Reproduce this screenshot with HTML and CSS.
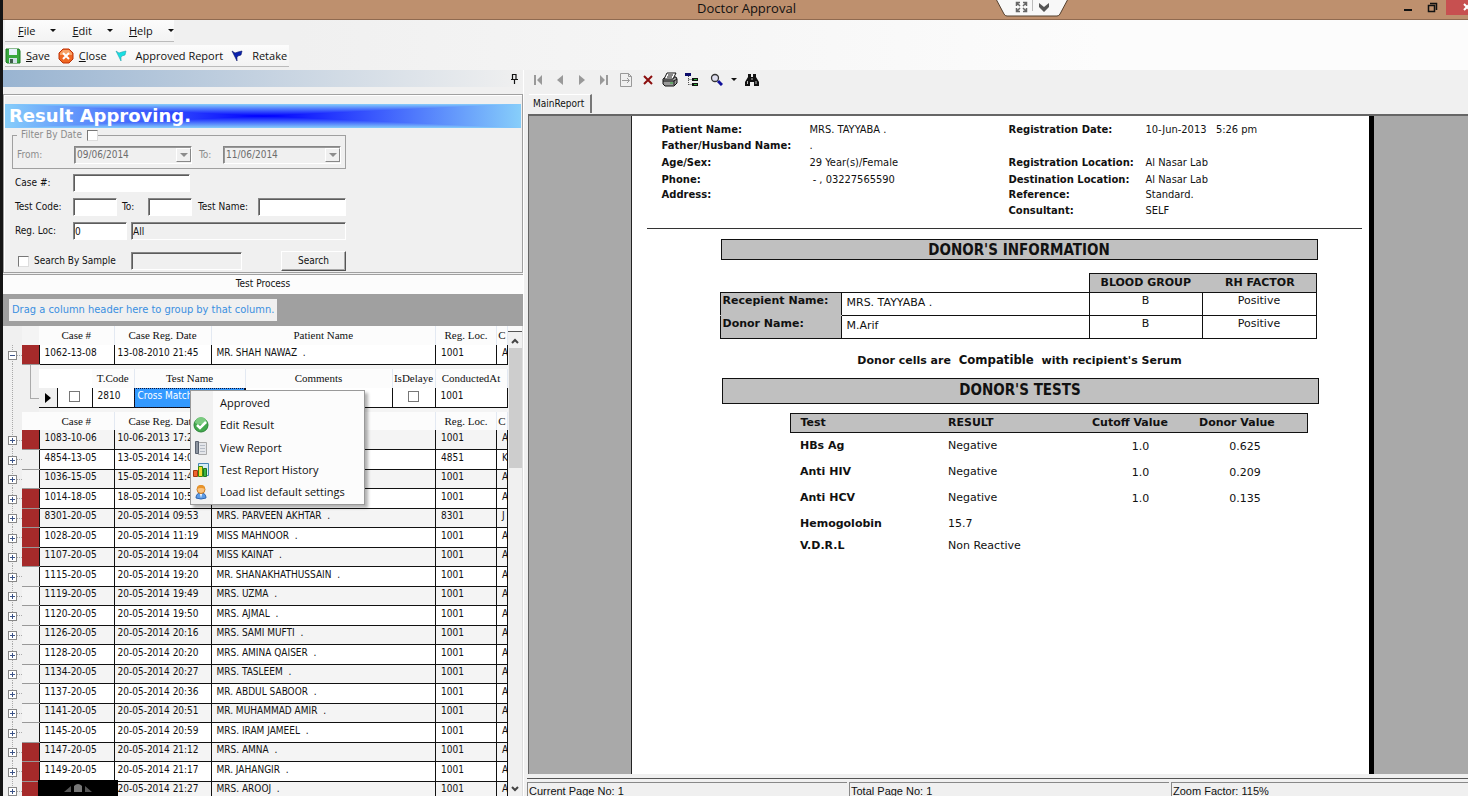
FILE: index.html
```
<!DOCTYPE html>
<html lang="en">

<head>
    <meta charset="UTF-8">
    <title>Doctor Approval</title>
    <link rel="stylesheet" href="styles.css">
</head>

<body>
    <header class="titlebar">
        <h1>Doctor Approval</h1>
        <div class="remote-tab">
            <svg width="74" height="18" viewBox="0 0 74 18">
                <path d="M1 -1L9 14Q10 16 12 16H62Q64 16 65 14L73 -1Z" fill="#f8f8f8" stroke="#54402f" stroke-width="1" />
                <path d="M21.500 6V2.500H25M28 2.500h3.500V6M31.500 8v3.500H28M25 11.500h-3.500V8M22 3l3 3M31 3l-3 3M31 11l-3-3M22 11l3-3" fill="none" stroke="#666" stroke-width="1.500" />
                <path d="M37.500 0V11" stroke="#bbb" />
                <path d="M44 3l5 4 5-4v4l-5 5-5-5z" fill="#555" />
            </svg>
        </div>
        <div class="window-buttons">
            <button aria-label="Minimize"><svg width="10" height="12"><path d="M1 8h8" stroke="#111" stroke-width="2" /></svg></button>
            <button aria-label="Restore"><svg width="12" height="12"><path d="M1.500 3.500h6v6h-6zM3 1.500h6.500V8" fill="none" stroke="#111" stroke-width="1.500" /></svg></button>
            <button class="close" aria-label="Close"><svg width="5" height="12"><path d="M1 2l6 6M1 8l6-6" stroke="#fff" stroke-width="2" /></svg></button>
        </div>
    </header>

    <div class="bars">
        <nav class="menubar">
            <button><u>F</u>ile<i class="caret"></i></button>
            <button><u>E</u>dit<i class="caret"></i></button>
            <button><u>H</u>elp<i class="caret"></i></button>
        </nav>
        <div class="toolbar">
            <button>
                <svg width="16" height="16" viewBox="0 0 16 16">
                    <path d="M1 1h13l1 2v12H2l-1-1z" fill="#38a83c" stroke="#1e7a25" />
                    <path d="M4 1h8v6H4z" fill="#e6f1fa" />
                    <path d="M4 10h8v5H4z" fill="#cfe0e8" />
                    <path d="M5 11h3v4H5z" fill="#3b5d48" />
                </svg>
                <span><u>S</u>ave</span>
            </button>
            <button>
                <svg width="16" height="16" viewBox="0 0 16 16">
                    <path d="M5 1h6l4 4v6l-4 4H5l-4-4V5z" fill="#ef6722" stroke="#bd3208" />
                    <path d="M5 2h6l3 3v2H2V5z" fill="#f8a267" />
                    <path d="M5 5l6 6M11 5l-6 6" stroke="#fff" stroke-width="2" />
                </svg>
                <span><u>C</u>lose</span>
            </button>
            <button class="flag">
                <svg width="12" height="12" viewBox="0 0 12 12"><path d="M1 1l3 2 3-1 4-1-1 4-3 1-1 1v4l-2-4z" fill="#18dfe2" stroke="#24a4b0" stroke-width=".6" /></svg>
                <span>Approved Report</span>
            </button>
            <button class="flag">
                <svg width="12" height="12" viewBox="0 0 12 12"><path d="M1 1l3 2 3-1 4-1-1 4-3 1-1 1v4l-2-4z" fill="#0b22b0" stroke="#0a1668" stroke-width=".6" /></svg>
                <span>Retake</span>
            </button>
        </div>
    </div>

    <main>
        <!-- search form and case list -->
        <section class="left">
            <div class="dock-bar">
                <svg width="9" height="11" viewBox="0 0 9 11"><path d="M2.500 6V1.500H6V6M1 6.500h7M4.500 7v4M6 1v5" fill="none" stroke="#111" stroke-width="1.200" /></svg>
            </div>
            <form class="search">
                <h2><span>Result Approving.</span></h2>
                <fieldset>
                    <legend><label for="byDate">Filter By Date</label><input type="checkbox" id="byDate"></legend>
                    <label class="c1" for="from">From:</label>
                    <div class="combo"><select id="from" disabled><option>09/06/2014</option></select><span><i class="caret"></i></span></div>
                    <label class="to" for="to">To:</label>
                    <div class="combo"><select id="to" disabled><option>11/06/2014</option></select><span><i class="caret"></i></span></div>
                </fieldset>
                <div class="row">
                    <label class="c1" for="caseNo">Case #:</label>
                    <input type="text" class="w-case" id="caseNo">
                </div>
                <div class="row">
                    <label class="c1" for="codeFrom">Test Code:</label>
                    <input type="text" class="w-code" id="codeFrom">
                    <label class="code-to" for="codeTo">To:</label>
                    <input type="text" class="w-code" id="codeTo">
                    <label class="name" for="testName">Test Name:</label>
                    <input type="text" class="grow" id="testName">
                </div>
                <div class="row">
                    <label class="c1" for="loc">Reg. Loc:</label>
                    <input type="text" class="w-loc" id="loc" value="0">
                    <input type="text" class="grow off" aria-label="Location name" value="All" readonly>
                </div>
                <div class="row last">
                    <label class="sample"><input type="checkbox"> Search By Sample</label>
                    <input type="text" class="w-sample off" aria-label="Sample" readonly>
                    <button type="button" class="btn">Search</button>
                </div>
            </form>
            <div class="caption">Test Process</div>
            <div class="group-bar"><span>Drag a column header here to group by that column.</span></div>
            <div class="grid">
                <table class="cases">
                    <colgroup>
                        <col class="k-tree"><col class="k-mark"><col class="k-case"><col class="k-date"><col><col class="k-loc"><col class="k-c">
                    </colgroup>
                    <tbody id="cases">
                        <tr class="head first">
                            <td></td><td></td><th>Case #</th><th>Case Reg. Date</th><th>Patient Name</th><th>Reg. Loc.</th><th>C</th>
                        </tr>
                        <tr>
                            <td class="tree"><button class="expand" aria-label="Collapse"></button></td>
                            <td class="mark red"></td><td>1062-13-08</td><td>13-08-2010 21:45</td><td>MR. SHAH NAWAZ&nbsp; .</td><td>1001</td><td>A</td>
                        </tr>
                        <tr class="detail">
                            <td class="tree line"></td>
                            <td class="elbow"></td>
                            <td colspan="5">
                                <table class="tests">
                                    <colgroup>
                                        <col class="t-arrow"><col class="t-check"><col class="t-code"><col class="t-name"><col><col class="t-delay"><col class="t-at">
                                    </colgroup>
                                    <tr class="head">
                                        <td colspan="2"></td><th>T.Code</th><th>Test Name</th><th>Comments</th><th>IsDelaye</th><th>ConductedAt</th>
                                    </tr>
                                    <tr>
                                        <td class="arrow"><svg width="6" height="10"><path d="M0 0l6 5-6 5z" /></svg></td>
                                        <td class="check"><input type="checkbox" aria-label="Select test"></td>
                                        <td>2810</td>
                                        <td class="selected">Cross Match</td>
                                        <td></td>
                                        <td class="check"><input type="checkbox" aria-label="Delayed"></td>
                                        <td>1001</td>
                                    </tr>
                                </table>
                            </td>
                        </tr>
                        <tr class="head">
                            <td class="tree line"></td><td></td><th>Case #</th><th>Case Reg. Date</th><th>Patient Name</th><th>Reg. Loc.</th><th>C</th>
                        </tr>
                    </tbody>
                </table>
                <div class="scrollbar">
                    <div class="splitter"></div>
                    <svg width="8" height="6"><path d="M1 5l3-3 3 3" fill="none" stroke="#444" stroke-width="2" /></svg>
                    <div class="thumb"></div>
                    <svg class="down" width="8" height="6"><path d="M1 1l3 3 3-3" fill="none" stroke="#444" stroke-width="2" /></svg>
                </div>
            </div>
        </section>

        <!-- report preview -->
        <section class="right">
            <div class="viewer-tools">
                <button aria-label="First page"><svg width="10" height="12"><path d="M1 1h2v10H1zM9 1v10L4 6z" fill="#999" /></svg></button>
                <button aria-label="Previous page"><svg width="10" height="12"><path d="M8 1v10L2 6z" fill="#999" /></svg></button>
                <button aria-label="Next page"><svg width="10" height="12"><path d="M2 1v10l6-5z" fill="#999" /></svg></button>
                <button aria-label="Last page"><svg width="10" height="12"><path d="M1 1v10l5-5zM7 1h2v10H7z" fill="#999" /></svg></button>
                <button aria-label="Go to page"><svg width="14" height="16"><path d="M1.500 1.500h8l3 3v10h-11zM9.500 1.500v3h3M3 8.500h7M8 6l2.500 2.500L8 11" fill="none" stroke="#999" /></svg></button>
                <button aria-label="Close view"><svg width="10" height="10"><path d="M1 1l8 8M9 1L1 9" stroke="#8b0d0d" stroke-width="2" /></svg></button>
                <button aria-label="Print">
                    <svg width="16" height="15" viewBox="0 0 16 15">
                        <path d="M1 7l3-2h10l1 2v4l-3 3H3l-2-2z" fill="#999" stroke="#111" />
                        <path d="M5 1h9l-3 6H2z" fill="#fff" stroke="#111" />
                        <path d="M1 9h11M12 13V9l3-2M6 3h5M5 5h5" fill="none" stroke="#111" />
                        <path d="M8 11h3" stroke="#2fae3a" />
                    </svg>
                </button>
                <button aria-label="Group tree">
                    <svg width="14" height="13" viewBox="0 0 14 13">
                        <path d="M0 0h6v3H0z" fill="#0a0a6a" />
                        <path d="M3.500 3v9M3.500 6.500H8M3.500 11.500H8" stroke="#555" stroke-dasharray="1 1" />
                        <path d="M7 5h6v3H7zM7 10h6v3H7z" fill="#111" />
                        <path d="M9 6.500h3M9 11.500h3" stroke="#2fae3a" />
                    </svg>
                </button>
                <button class="zoom" aria-label="Zoom"><svg width="13" height="13"><circle cx="5" cy="5" r="3.500" fill="#dde" stroke="#333" stroke-width="1.300" /><path d="M8 8l4 4" stroke="#10109a" stroke-width="3" /></svg><i class="caret"></i></button>
                <button aria-label="Search text">
                    <svg width="14" height="14" viewBox="0 0 14 14">
                        <path d="M3 1h3v3h2V1h3v3l3 5v4H9V9H5v4H0V9l3-5z" fill="#111" />
                        <path d="M2.500 8v3M11 8v3M7 5v2" stroke="#bbb" />
                    </svg>
                </button>
            </div>
            <div class="tabs"><button>MainReport</button></div>
            <div class="viewer">
                <article class="page">
                    <div class="patient">
                        <b>Patient Name:</b><span>MRS. TAYYABA .</span><b>Registration Date:</b><span>10-Jun-2013 &nbsp; 5:26 pm</span>
                        <b>Father/Husband Name:</b><span>.</span><b></b><span></span>
                        <b>Age/Sex:</b><span>29 Year(s)/Female</span><b>Registration Location:</b><span>Al Nasar Lab</span>
                        <b>Phone:</b><span>&nbsp;- , 03227565590</span><b>Destination Location:</b><span>Al Nasar Lab</span>
                        <b>Address:</b><span></span><b>Reference:</b><span>Standard.</span>
                        <b></b><span></span><b>Consultant:</b><span>SELF</span>
                    </div>
                    <h3>DONOR'S INFORMATION</h3>
                    <table class="blood">
                        <colgroup><col class="b-label"><col><col class="b-group"><col class="b-factor"></colgroup>
                        <tr>
                            <td class="blank" colspan="2"></td><th class="bg">BLOOD GROUP</th><th class="rh">RH FACTOR</th>
                        </tr>
                        <tr>
                            <th class="side">Recepient Name:</th><td>MRS. TAYYABA .</td><td class="mid">B</td><td class="mid">Positive</td>
                        </tr>
                        <tr>
                            <th class="side">Donor Name:</th><td>M.Arif</td><td class="mid">B</td><td class="mid">Positive</td>
                        </tr>
                    </table>
                    <p class="verdict">Donor cells are <strong>Compatible</strong> with recipient's Serum</p>
                    <h3 class="tall">DONOR'S TESTS</h3>
                    <table class="results">
                        <colgroup><col class="r-test"><col class="r-result"><col class="r-cut"><col></colgroup>
                        <thead>
                            <tr><th>Test</th><th>RESULT</th><th>Cutoff Value</th><th>Donor Value</th></tr>
                        </thead>
                        <tbody>
                            <tr><th>HBs Ag</th><td>Negative</td><td>1.0</td><td>0.625</td></tr>
                            <tr><th>Anti HIV</th><td>Negative</td><td>1.0</td><td>0.209</td></tr>
                            <tr><th>Anti HCV</th><td>Negative</td><td>1.0</td><td>0.135</td></tr>
                            <tr><th>Hemogolobin</th><td>15.7</td><td></td><td></td></tr>
                            <tr class="short"><th>V.D.R.L</th><td>Non Reactive</td><td></td><td></td></tr>
                        </tbody>
                    </table>
                </article>
            </div>
            <footer class="status">
                <span>Current Page No: 1</span><span>Total Page No: 1</span><span>Zoom Factor: 115%</span>
            </footer>
        </section>
    </main>

    <div class="context-menu" role="menu">
        <button role="menuitem"><i></i>Approved</button>
        <button role="menuitem"><i>
            <svg width="16" height="16"><circle cx="8" cy="8" r="7" fill="#41a94c" stroke="#2b8437" /><path d="M2 6a6 6 0 0 1 12 0q-6 3-12 0" fill="#7bcb80" /><path d="M4 8l3 3 6-6" fill="none" stroke="#fff" stroke-width="2.500" /></svg>
        </i>Edit Result</button>
        <button role="menuitem"><i>
            <svg width="14" height="16"><path d="M4.500 2.500h8v12h-8z" fill="#e4e6ea" stroke="#aaa" /><path d="M1.500 1.500h3v12h-3z" fill="#8d95a0" stroke="#5a6270" /><path d="M6 5.500h5M6 8.500h5M6 11.500h5" stroke="#b5bbc5" /></svg>
        </i>View Report</button>
        <button role="menuitem"><i>
            <svg width="16" height="16"><path d="M5.500 1.500h10v12h-10z" fill="#d6ecf8" stroke="#4788b5" /><path d="M.5 8.500h4v6h-4z" fill="#f0642e" stroke="#a33a10" /><path d="M5.500 4.500h4v10h-4z" fill="#f7d92f" stroke="#3a8a10" /><path d="M10.500 6.500h3v8h-3z" fill="#3db53f" stroke="#1d7420" /></svg>
        </i>Test Report History</button>
        <button role="menuitem"><i>
            <svg width="14" height="16"><path d="M2 14q0-5 5-5t5 5q-5 2-10 0z" fill="#5c9be6" stroke="#2f66b0" /><circle cx="7" cy="5.500" r="4" fill="#fbc27c" stroke="#c77b24" /><path d="M3 5q0-4 4-4t4 4q-4-2-8 0z" fill="#e8942a" /><path d="M6 10l1 4 1-4z" fill="#fff" /></svg>
        </i>Load list default settings</button>
    </div>

    <div class="touch-bar">
        <svg width="28" height="8"><path d="M0 8l7-6v6zM28 8l-7-6v6z" fill="#555" /><path d="M10 8V2q4-4 8 0v6z" fill="#777" /></svg>
    </div>

    <script>
        // case no, reg. date, patient, location, conducted by, marked red
        const cases = [
            ['1083-10-06', '10-06-2013 17:26', '', '1001', 'A', 1],
            ['4854-13-05', '13-05-2014 14:05', '', '4851', 'K', 0],
            ['1036-15-05', '15-05-2014 11:42', '', '1001', 'A', 0],
            ['1014-18-05', '18-05-2014 10:55', '', '1001', 'A', 1],
            ['8301-20-05', '20-05-2014 09:53', 'MRS. PARVEEN AKHTAR', '8301', 'J', 1],
            ['1028-20-05', '20-05-2014 11:19', 'MISS MAHNOOR', '1001', 'A', 1],
            ['1107-20-05', '20-05-2014 19:04', 'MISS KAINAT', '1001', 'A', 1],
            ['1115-20-05', '20-05-2014 19:20', 'MR. SHANAKHATHUSSAIN', '1001', 'A', 0],
            ['1119-20-05', '20-05-2014 19:49', 'MRS. UZMA', '1001', 'A', 0],
            ['1120-20-05', '20-05-2014 19:50', 'MRS. AJMAL', '1001', 'A', 0],
            ['1126-20-05', '20-05-2014 20:16', 'MRS. SAMI MUFTI', '1001', 'A', 0],
            ['1128-20-05', '20-05-2014 20:20', 'MRS. AMINA QAISER', '1001', 'A', 0],
            ['1134-20-05', '20-05-2014 20:27', 'MRS. TASLEEM', '1001', 'A', 0],
            ['1137-20-05', '20-05-2014 20:36', 'MR. ABDUL SABOOR', '1001', 'A', 0],
            ['1141-20-05', '20-05-2014 20:51', 'MR. MUHAMMAD AMIR', '1001', 'A', 0],
            ['1145-20-05', '20-05-2014 20:59', 'MRS. IRAM JAMEEL', '1001', 'A', 0],
            ['1147-20-05', '20-05-2014 21:12', 'MRS. AMNA', '1001', 'A', 1],
            ['1149-20-05', '20-05-2014 21:17', 'MR. JAHANGIR', '1001', 'A', 1],
            ['1150-20-05', '20-05-2014 21:27', 'MRS. AROOJ', '1001', 'A', 1]
        ];

        const body = document.getElementById('cases');
        cases.forEach(([no, date, patient, loc, by, red]) => {
            const tr = document.createElement('tr');
            tr.innerHTML = `<td class="tree"><button class="expand plus" aria-label="Expand"></button></td>
                <td class="mark ${red ? 'red' : ''}"></td><td>${no}</td><td>${date}</td>
                <td>${patient ? patient + '&nbsp; .' : ''}</td><td>${loc}</td><td>${by}</td>`;
            body.appendChild(tr);
        });
    </script>
</body>

</html>
```
FILE: styles.css
```
* {
    box-sizing: border-box;
}

body {
    display: flex;
    flex-direction: column;
    height: 100vh;
    margin: 0;
    border-left: 3px solid #151515;
    background: #f0f0f0;
    color: #111;
    font: 10px/14px "DejaVu Sans Condensed", "DejaVu Sans", sans-serif;
    overflow: hidden;
}

button {
    display: flex;
    align-items: center;
    padding: 0;
    border: 0;
    background: none;
    color: inherit;
    font: inherit;
}

table {
    border-collapse: collapse;
    table-layout: fixed;
}

td,
th {
    padding: 0;
}

.caret {
    width: 0;
    border: 3px solid transparent;
    border-top-color: currentColor;
    border-bottom: 0;
}

/* title bar */
.titlebar {
    position: relative;
    flex: none;
    height: 20px;
    background: #be906e;
    border-bottom: 1px solid #8f6a50;
}

.titlebar h1 {
    margin: 0 0 0 22px;
    font: 13px/17px "Open Sans", sans-serif;
    text-align: center;
}

.remote-tab {
    position: absolute;
    top: 0;
    right: 399px;
}

.window-buttons {
    position: absolute;
    top: 0;
    right: 0;
    display: flex;
    gap: 14px;
    height: 15px;
}

.window-buttons .close {
    width: 22px;
    margin-left: -7px;
    background: #c75050;
    justify-content: flex-end;
}

/* menu and toolbar */
.bars {
    flex: none;
    height: 50px;
    padding: 0 2px;
    background: linear-gradient(90deg, #f0f0f0 20%, #fcfcfc 75%);
    font: 11px/20px "Open Sans", sans-serif;
}

.menubar,
.toolbar {
    display: flex;
    width: 169px;
    height: 22px;
    margin-bottom: 3px;
    background: linear-gradient(#fcfcfc, #f3f3f3);
    border-bottom: 1px solid #bbb;
}

.menubar {
    gap: 16px;
    padding-left: 13px;
}

.menubar .caret {
    margin-left: 15px;
}

.toolbar {
    width: 284px;
    gap: 8px;
}

.toolbar button {
    gap: 5px;
}

.toolbar .flag {
    gap: 9px;
}

main {
    display: flex;
    flex: 1;
    min-height: 0;
}

/* left pane */
.left {
    display: flex;
    flex-direction: column;
    flex: none;
    width: 521px;
    border-right: 1px solid #fff;
}

.dock-bar {
    display: flex;
    flex: none;
    justify-content: flex-end;
    align-items: center;
    height: 17px;
    margin-bottom: 7px;
    padding-right: 4px;
    background: linear-gradient(90deg, #99b4d1, #f0f0f0);
}

.search {
    flex: none;
    height: 179px;
    padding: 9px 1px 0;
    border: 1px solid #a0a0a0;
    box-shadow: inset 1px 1px #fff;
}

/* the banner shades from its centre out to all four edges */
.search h2 {
    position: relative;
    height: 24px;
    margin: 0 0 2px;
    padding-left: 4px;
    background: linear-gradient(#87cefa, #0000ff, #87cefa);
    color: #fff;
    font: bold 18px/23px "DejaVu Sans", sans-serif;
}

.search h2::before {
    content: "";
    position: absolute;
    inset: 0;
    background: linear-gradient(90deg, #87cefa, #0000ff, #87cefa);
    clip-path: polygon(0 0, 100% 100%, 100% 0, 0 100%);
}

.search h2 span {
    position: relative;
}

fieldset {
    display: flex;
    align-items: center;
    width: 334px;
    height: 39px;
    margin: 0 0 5px 7px;
    padding: 0 4px;
    border: 1px solid #a0a0a0;
    color: #8c8c8c;
}

legend {
    display: flex;
    gap: 5px;
    padding: 0 0 0 4px;
    line-height: 10px;
}

fieldset .c1 {
    width: 57px;
}

label {
    flex: none;
}

input[type="text"],
select {
    height: 18px;
    padding: 0 1px;
    border: 1px solid;
    border-color: #868686 #fff #fff #868686;
    border-radius: 0;
    box-shadow: inset 1px 1px #5c5c5c;
    background: #fff;
    font: inherit;
    color: inherit;
    min-width: 0;
}

input[type="text"].off {
    background: #f0f0f0;
}

input[type="checkbox"] {
    appearance: none;
    width: 11px;
    height: 11px;
    margin: 0;
    border: 1px solid #777;
    border-right-color: #ddd;
    border-bottom-color: #ddd;
    background: #fff;
}

.combo {
    position: relative;
    width: 118px;
}

.combo select {
    appearance: none;
    display: block;
    width: 100%;
    padding: 1px 2px 0;
    background: #f0f0f0;
    opacity: 1;
    box-shadow: inset 1px 1px #999;
    font-size: 10px;
    color: #6d6d6d;
}

.combo span {
    position: absolute;
    top: 2px;
    right: 1px;
    display: flex;
    align-items: center;
    justify-content: center;
    width: 15px;
    height: 14px;
    border: 1px solid #888;
    border-top-color: #fff;
    border-left-color: #fff;
}

.combo .caret {
    border-width: 4px 4px 0;
}

.to {
    width: 31px;
    padding-left: 7px;
}

.row {
    display: flex;
    align-items: center;
    width: 341px;
    height: 18px;
    margin-bottom: 6px;
    padding-left: 10px;
}

.row .c1 {
    width: 58px;
}

.w-case {
    width: 117px;
}

.w-code {
    width: 44px;
}

.code-to {
    width: 31px;
    padding-left: 5px;
}

.name {
    width: 66px;
    padding-left: 6px;
}

.w-loc {
    width: 54px;
    margin-right: 4px;
}

.grow {
    flex: 1;
}

.row.last {
    margin-top: 12px;
}

.sample {
    display: flex;
    align-items: center;
    gap: 5px;
    width: 116px;
    padding-left: 3px;
}

.w-sample {
    width: 111px;
}

.btn {
    justify-content: center;
    width: 65px;
    height: 20px;
    margin-left: auto;
    border: 1px solid;
    border-color: #fff #555 #555 #fff;
    box-shadow: inset -1px -1px #aaa;
}

.caption {
    flex: none;
    height: 20px;
    margin-top: 1px;
    border-top: 1px solid #a0a0a0;
    background: #fcfcfc;
    line-height: 18px;
    text-align: center;
}

.group-bar {
    flex: none;
    height: 32px;
    padding: 5px 6px;
    background: #a0a0a0;
}

.group-bar span {
    display: inline-block;
    height: 22px;
    padding: 0 3px;
    background: #f0f0f0;
    color: #3a8fe0;
    font: 11px/22px "DejaVu Sans Condensed", "DejaVu Sans", sans-serif;
}

/* case list */
.grid {
    display: flex;
    flex: 1;
    min-height: 0;
}

.cases {
    flex: 1;
    width: 505px;
    height: max-content;
}

.k-tree {
    width: 19px;
}

.k-mark {
    width: 17px;
}

.k-case {
    width: 75px;
}

.k-date {
    width: 97px;
}

.k-loc {
    width: 61px;
}

.k-c {
    width: 11px;
}

.cases tr {
    height: 20px;
}

.cases tr:nth-child(odd) {
    height: 19px;
}

.cases td {
    padding: 0 0 3px 5px;
    border-right: 1px solid #111;
    border-bottom: 1px solid #111;
    background: #fff;
    line-height: 14px;
    white-space: nowrap;
    overflow: hidden;
}

.cases tr:nth-child(odd) td {
    background: #f4f4f4;
}

.cases td:nth-child(4) {
    padding-left: 3px;
}

.cases .head {
    height: 18px;
}

.cases .head.first,
.cases .head.first + tr {
    height: 19px;
}

.cases .head td,
.cases .head th {
    padding: 0;
    background: #fcfcfc;
    border: 0;
    font: 10px/17px "Liberation Serif", serif;
}

.cases .head th {
    border-right: 1px solid #e3e9f2;
    font-size: 11px;
    overflow: hidden;
}

.cases tr .tree,
.cases tr:nth-child(odd) .tree {
    padding: 2px 0 0 5px;
    border: 0;
    background:
        linear-gradient(#aaa 50%, transparent 50%) 9px 0 / 1px 2px repeat-y,
        linear-gradient(90deg, #aaa 50%, transparent 50%) 0 10px / 2px 1px repeat-x,
        #f0f0f0;
}

/* hides the horizontal dots left of the box */
.cases tr .tree:not(.line) {
    box-shadow: inset 5px 0 #f0f0f0;
}

.cases tr .tree.line,
.cases tr:nth-child(odd) .tree.line {
    background: linear-gradient(#aaa 50%, transparent 50%) 9px 0 / 1px 2px repeat-y #f0f0f0;
}

.cases .head.first td:first-child {
    background: #f0f0f0;
}

.cases tr .mark {
    border-bottom-color: #999;
    background: #f0f0f0;
}

.cases tr .mark.red,
.cases tr:nth-child(odd) .mark.red {
    background: #a52a2a;
}

.expand {
    justify-content: center;
    width: 9px;
    height: 9px;
    border: 1px solid #888;
    background: linear-gradient(#3c5488, #3c5488) center / 5px 1px no-repeat, #fff;
}

.expand.plus {
    background: linear-gradient(#3c5488, #3c5488) center / 5px 1px no-repeat, linear-gradient(#3c5488, #3c5488) center / 1px 5px no-repeat, #fff;
}

.cases .detail,
.cases .detail > td {
    height: 48px;
    padding: 0;
    border: 0;
    background: #f0f0f0;
    vertical-align: middle;
}

.cases .detail .elbow {
    background: linear-gradient(#aaa, #aaa) 8px 0 / 1px 33px no-repeat, linear-gradient(#aaa, #aaa) 8px 33px / 9px 1px no-repeat, #f0f0f0;
}

.tests {
    width: 100%;
}

.t-arrow {
    width: 18px;
}

.t-check {
    width: 35px;
}

.t-code {
    width: 42px;
}

.t-name {
    width: 111px;
}

.t-delay {
    width: 43px;
}

.t-at {
    width: 72px;
}

.tests tr:nth-child(n) td {
    background: #fff;
}

.cases .tests .selected {
    background: #3399ff;
    color: #fff;
    outline: 1px dotted #113;
    outline-offset: -1px;
}

.cases .tests .check {
    padding: 2px 0 0;
    text-align: center;
}

.cases .tests .arrow {
    padding: 4px 0 0 6px;
    background: #f0f0f0;
    line-height: 10px;
}

.check input[type="checkbox"] {
    border-color: #777;
}

.scrollbar {
    display: flex;
    flex-direction: column;
    align-items: center;
    width: 15px;
    padding-bottom: 4px;
    border-right: 1px solid #ddd;
}

.splitter {
    width: 100%;
    height: 6px;
    margin-bottom: 6px;
    border-bottom: 1px solid #555;
    background: #fafafa;
}

.thumb {
    width: 13px;
    height: 120px;
    margin-top: 4px;
    background: #cdcdcd;
}

.scrollbar .down {
    margin-top: auto;
}

/* right pane */
.right {
    display: flex;
    flex-direction: column;
    flex: 1;
    min-width: 0;
    padding-left: 3px;
}

.viewer-tools {
    display: flex;
    flex: none;
    height: 19px;
}

.viewer-tools button {
    justify-content: center;
    width: 22px;
}

.viewer-tools .zoom {
    justify-content: flex-start;
    width: 38px;
    padding-left: 7px;
}

.viewer-tools .caret {
    margin-left: 8px;
}

.tabs {
    flex: none;
    height: 26px;
    padding: 5px 2px 0;
}

.tabs button {
    height: 19px;
    padding: 0 6px 0 4px;
    border-top: 1px solid #fff;
    border-right: 2px solid #777;
}

.viewer {
    display: flex;
    flex: 1;
    justify-content: center;
    min-height: 0;
    margin: -1px 0 4px 1px;
    padding-left: 7px;
    border-top: 2px solid #666;
    border-left: 1px solid #666;
    background: #a9a9a9;
    overflow: hidden;
}

.page {
    width: 743px;
    padding: 6px 7px 0 15px;
    border-left: 1px solid #222;
    border-right: 5px solid #000;
    background: #fff;
    font: 11px/14px "DejaVu Sans", sans-serif;
}

.patient {
    display: grid;
    grid-template: 16px 16px 18px 16px 14px 18px / 148px 199px 137px 1fr;
    align-items: center;
    height: 107px;
    padding-left: 15px;
    border-bottom: 1px solid #333;
    font-family: "DejaVu Sans Condensed", "DejaVu Sans", sans-serif;
}

.patient b {
    font-family: "DejaVu Sans", sans-serif;
    font-size: 10px;
}

.page h3 {
    width: 597px;
    height: 21px;
    margin: 10px 0 13px 74px;
    border: 1px solid #111;
    background: #c0c0c0;
    font: bold 15px/20px "DejaVu Sans Condensed", "DejaVu Sans", sans-serif;
    text-align: center;
}

.page .tall {
    height: 26px;
    margin: 8px 0 9px 75px;
    line-height: 23px;
}

.blood {
    width: 597px;
    margin-left: 73px;
}

.b-label {
    width: 121px;
}

.b-group {
    width: 113px;
}

.b-factor {
    width: 114px;
}

.blood tr {
    height: 23px;
}

.blood tr:first-child {
    height: 19px;
}

.blood th,
.blood td {
    padding: 0 0 3px 5px;
    border: 1px solid #111;
    text-align: left;
}

.blood th {
    padding-bottom: 0;
    background: #c0c0c0;
}

.blood .side {
    padding: 0 0 7px 2px;
    border-bottom-color: #c0c0c0;
}

.blood tr:last-child .side {
    border-bottom-color: #111;
}

.blood td.blank {
    padding: 0;
    border: 0;
}

.blood .bg {
    padding-left: 11px;
    border-right: 0;
}

.blood .rh {
    padding-left: 23px;
    border-left: 0;
}

.blood .mid {
    padding: 0 0 7px;
    text-align: center;
}

.verdict {
    margin: 12px 0 0 31px;
    font-weight: bold;
    line-height: 18px;
    text-align: center;
}

.verdict strong {
    margin: 0 4px;
    font-family: "DejaVu Sans Condensed", "DejaVu Sans", sans-serif;
    font-size: 13px;
}

.results {
    width: 518px;
    margin-left: 143px;
}

.r-test {
    width: 150px;
}

.r-result {
    width: 144px;
}

.r-cut {
    width: 107px;
}

.results thead {
    border: 1px solid #111;
    background: #c0c0c0;
}

.results th {
    height: 19px;
    padding-left: 10px;
    text-align: left;
}

.results thead th + th {
    padding-left: 8px;
}

.results tbody tr {
    height: 26px;
}

.results tbody .short {
    height: 18px;
}

.results td {
    padding-left: 8px;
}

.results td:nth-child(3) {
    padding: 3px 0 0 6px;
    text-align: center;
}

.results td:nth-child(4) {
    padding: 3px 8px 0 0;
    text-align: center;
}

.status {
    display: flex;
    flex: none;
    gap: 2px;
    height: 18px;
    padding-top: 3px;
    border-top: 1px solid #555;
    font: 11px/17px "Liberation Sans", sans-serif;
}

.status span {
    flex: 1 1 320px;
    padding-left: 1px;
    border-top: 1px solid #888;
    border-left: 1px solid #888;
    white-space: nowrap;
}

.status span:last-child {
    flex-basis: 297px;
}

/* popups */
.context-menu {
    position: absolute;
    top: 390px;
    left: 190px;
    display: flex;
    flex-direction: column;
    width: 175px;
    height: 115px;
    padding: 1px;
    border: 1px solid #999;
    background: linear-gradient(90deg, #f1f1f1 22px, #fcfcfc 22px);
    box-shadow: 3px 3px 3px rgba(0, 0, 0, 0.3);
    font: 11px/20px "Open Sans", sans-serif;
}

.context-menu button {
    flex: 1;
    white-space: nowrap;
}

.context-menu i {
    display: flex;
    justify-content: center;
    width: 18px;
    margin-right: 10px;
}

.touch-bar {
    position: absolute;
    bottom: 0;
    left: 38px;
    display: flex;
    align-items: center;
    justify-content: center;
    width: 80px;
    height: 16px;
    background: #000;
}
```
